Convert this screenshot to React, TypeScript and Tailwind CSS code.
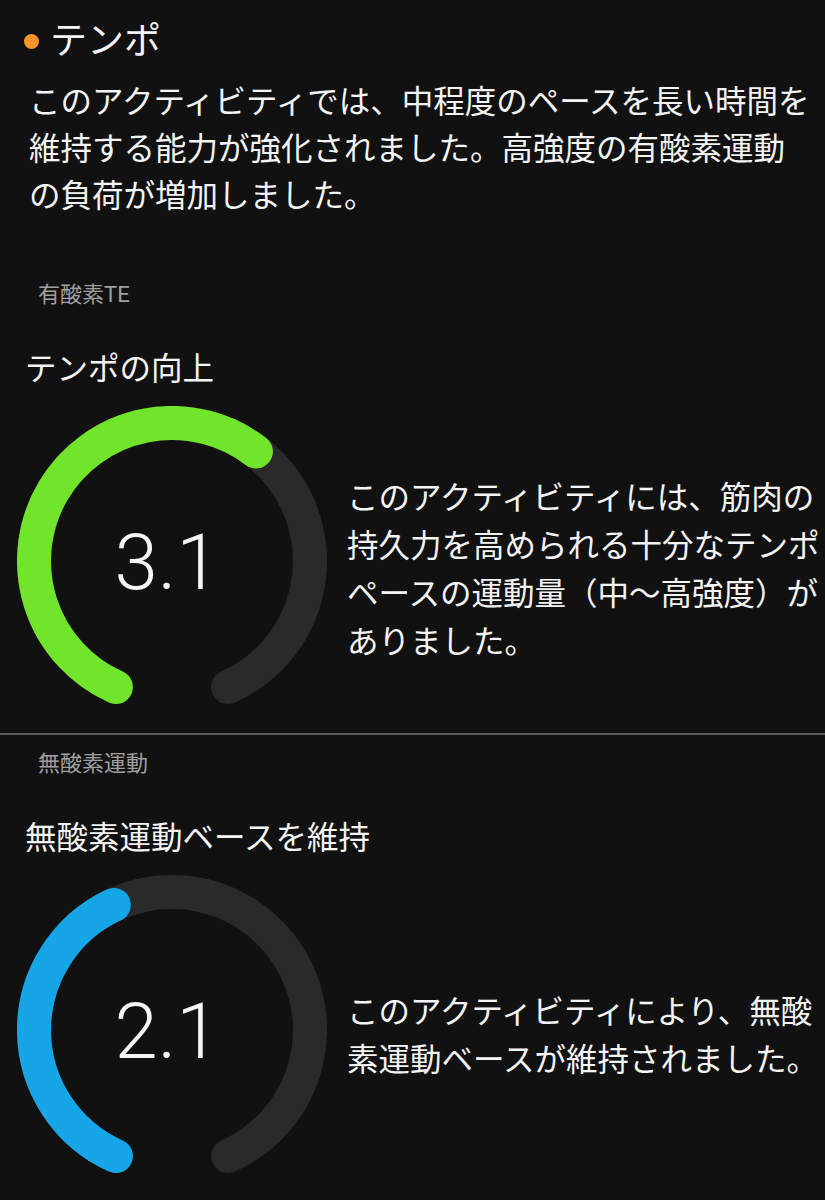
const R = 138;
const C = 155;
const START = 204;
const SPAN = 312;

const point = (deg: number) => {
  const t = (deg * Math.PI) / 180;
  return [C + R * Math.sin(t), C - R * Math.cos(t)];
};

const arcPath = (a0: number, a1: number) => {
  const [x0, y0] = point(a0);
  const [x1, y1] = point(a1);
  const large = a1 - a0 > 180 ? 1 : 0;
  return `M ${x0} ${y0} A ${R} ${R} 0 ${large} 1 ${x1} ${y1}`;
};

interface GaugeProps {
  value: number;
  color: string;
}

const Gauge = ({ value, color }: GaugeProps) => {
  const end = START + (SPAN * value) / 5;
  return (
    <svg width="310" height="310" viewBox="0 0 310 310" className="shrink-0 ml-[17px]">
      <path d={arcPath(START, START + SPAN)} fill="none" stroke="#2a2a2a" strokeWidth="34" strokeLinecap="round" />
      <path d={arcPath(START, end)} fill="none" stroke={color} strokeWidth="34" strokeLinecap="round" />
      <text
        x="150"
        y="183"
        textAnchor="middle"
        fill="#f5f5f5"
        fontSize="78"
        fontWeight="300"
        fontFamily="Roboto, 'Noto Sans', sans-serif"
      >
        {value.toFixed(1)}
      </text>
    </svg>
  );
};

interface SectionProps {
  label: string;
  title: string;
  value: number;
  color: string;
  lines: string[];
  textTop: string;
}

const Section = ({ label, title, value, color, lines, textTop }: SectionProps) => {
  return (
    <div>
      {/* small label */}
      <div className="pl-[38px] text-[22px] leading-[30px] text-[#a0a0a0] font-['Roboto','Noto_Sans_CJK_JP',sans-serif]">
        {label}
      </div>

      {/* heading */}
      <div className="mt-[36px] pl-[25px] text-[31.5px] leading-[40px]">
        {title}
      </div>

      {/* gauge + description */}
      <div className="mt-[20px] flex">
        <Gauge value={value} color={color} />
        <div className={`ml-[20px] text-[31.5px] leading-[48px] ${textTop}`}>
          {lines.map((l) => (
            <div key={l} className="whitespace-nowrap">
              {l}
            </div>
          ))}
        </div>
      </div>
    </div>
  );
};

export default function App() {
  return (
    <div className="w-[825px] h-[1200px] overflow-hidden bg-[#111111] text-[#f4f4f4] font-['Noto_Sans_CJK_JP',sans-serif]">
      {/* Title */}
      <div className="flex items-center pl-[24px] pt-[14px]">
        <span className="w-[15px] h-[15px] mt-[6px] rounded-full bg-[#f7932a]" />
        <h1 className="ml-[11px] text-[37px] leading-[48px]">テンポ</h1>
      </div>

      {/* Summary */}
      <div className="mt-[14px] pl-[29px] text-[31.5px] leading-[47px]">
        <div className="whitespace-nowrap">このアクティビティでは、中程度のペースを長い時間を</div>
        <div className="whitespace-nowrap">維持する能力が強化されました。高強度の有酸素運動</div>
        <div className="whitespace-nowrap">の負荷が増加しました。</div>
      </div>

      <div className="mt-[63px]">
        <Section
          label="有酸素TE"
          title="テンポの向上"
          value={3.1}
          color="#70e52b"
          textTop="mt-[65px]"
          lines={[
            "このアクティビティには、筋肉の",
            "持久力を高められる十分なテンポ",
            "ペースの運動量（中～高強度）が",
            "ありました。",
          ]}
        />
      </div>

      {/* divider */}
      <div className="mt-[17px] h-[2px] bg-[#5c5c5c]" />

      <div className="mt-[14px]">
        <Section
          label="無酸素運動"
          title="無酸素運動ベースを維持"
          value={2.1}
          color="#16a6e8"
          textTop="mt-[110px]"
          lines={[
            "このアクティビティにより、無酸",
            "素運動ベースが維持されました。",
          ]}
        />
      </div>
    </div>
  );
}
